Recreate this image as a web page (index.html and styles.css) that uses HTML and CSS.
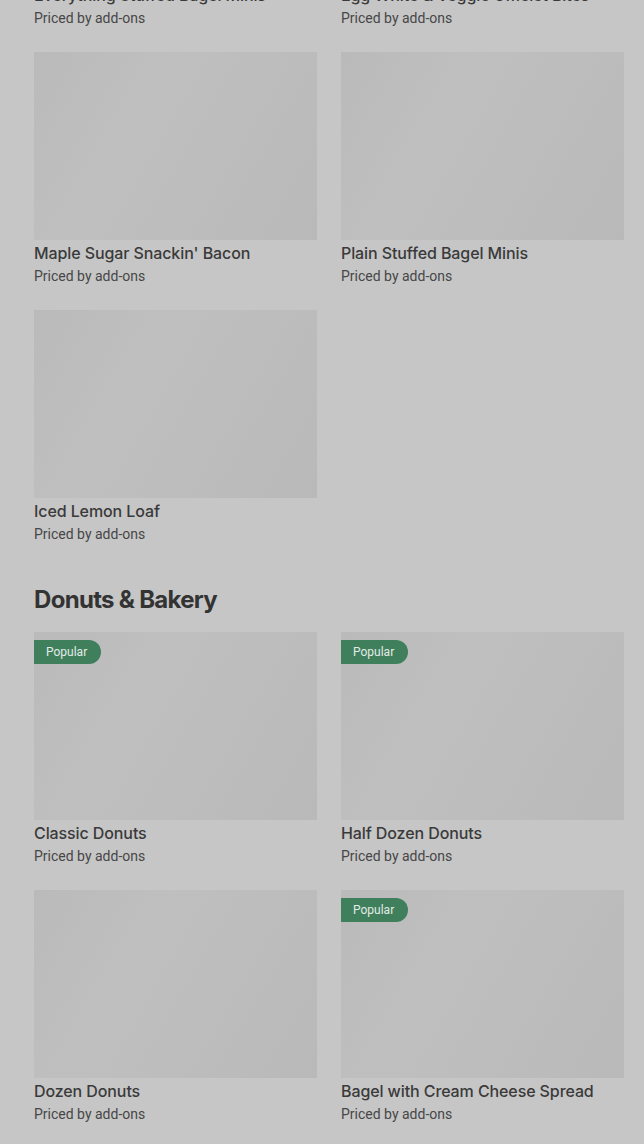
FILE: index.html
```html
<!DOCTYPE html>
<html lang="en">
<head>
  <meta charset="UTF-8" />
  <meta name="viewport" content="width=device-width, initial-scale=1" />
  <title>Menu</title>
  <link rel="stylesheet" href="styles.css">
</head>
<body>
  <main class="menu">
    <section class="section">
      <div class="grid">
        <div class="card">
          <div class="thumb"></div>
          <h3 class="card-title">Everything Stuffed Bagel Minis</h3>
          <p class="card-price">Priced by add-ons</p>
        </div>
        <div class="card">
          <div class="thumb"></div>
          <h3 class="card-title">Egg White &amp; Veggie Omelet Bites</h3>
          <p class="card-price">Priced by add-ons</p>
        </div>
        <div class="card">
          <div class="thumb"></div>
          <h3 class="card-title">Maple Sugar Snackin' Bacon</h3>
          <p class="card-price">Priced by add-ons</p>
        </div>
        <div class="card">
          <div class="thumb"></div>
          <h3 class="card-title">Plain Stuffed Bagel Minis</h3>
          <p class="card-price">Priced by add-ons</p>
        </div>
        <div class="card">
          <div class="thumb"></div>
          <h3 class="card-title">Iced Lemon Loaf</h3>
          <p class="card-price">Priced by add-ons</p>
        </div>
      </div>
    </section>

    <section class="section">
      <h2 class="section-title">Donuts &amp; Bakery</h2>
      <div class="grid">
        <div class="card">
          <div class="thumb"><span class="badge">Popular</span></div>
          <h3 class="card-title">Classic Donuts</h3>
          <p class="card-price">Priced by add-ons</p>
        </div>
        <div class="card">
          <div class="thumb"><span class="badge">Popular</span></div>
          <h3 class="card-title">Half Dozen Donuts</h3>
          <p class="card-price">Priced by add-ons</p>
        </div>
        <div class="card">
          <div class="thumb"></div>
          <h3 class="card-title">Dozen Donuts</h3>
          <p class="card-price">Priced by add-ons</p>
        </div>
        <div class="card">
          <div class="thumb"><span class="badge">Popular</span></div>
          <h3 class="card-title">Bagel with Cream Cheese Spread</h3>
          <p class="card-price">Priced by add-ons</p>
        </div>
      </div>
    </section>
  </main>
</body>
</html>
```

FILE: styles.css
```css
* {
  box-sizing: border-box;
}
body {
  margin: 0;
  background: #c6c6c6;
  font-family: Inter, "Noto Sans", sans-serif;
  color: #3a3a3a;
  overflow: hidden;
}

/* la página está desplazada: la primera fila queda cortada arriba */
.menu {
  margin-top: -206px;
  padding: 0 20px 0 34px;
}

.section-title {
  margin: 39px 0 16px;
  font-size: 24px;
  line-height: 32px;
  font-weight: 700;
  letter-spacing: -0.7px;
  color: #333;
}

.grid {
  display: grid;
  grid-template-columns: 1fr 1fr;
  column-gap: 24px;
  row-gap: 23px;
}

.card-title {
  margin: 1px 0 0;
  font-size: 16px;
  line-height: 24px;
  font-weight: 500;
  letter-spacing: -0.1px;
  color: #3a3a3a;
  white-space: nowrap;
}
.card-price {
  margin: 0;
  font-family: Roboto, "Noto Sans", sans-serif;
  font-size: 14px;
  line-height: 22px;
  color: #474747;
}

.thumb {
  position: relative;
  height: 188px;
  background: linear-gradient(120deg, #bababa 0%, #bfbfbf 35%, #bdbdbd 60%, #b9b9b9 100%);
}

.badge {
  position: absolute;
  top: 8px;
  left: 0;
  padding: 0 14px 0 12px;
  height: 24px;
  line-height: 24px;
  font-family: Roboto, "Noto Sans", sans-serif;
  font-size: 12px;
  color: #e2ece6;
  background: #3f7f5c;
  border-radius: 0 12px 12px 0;
}
```
